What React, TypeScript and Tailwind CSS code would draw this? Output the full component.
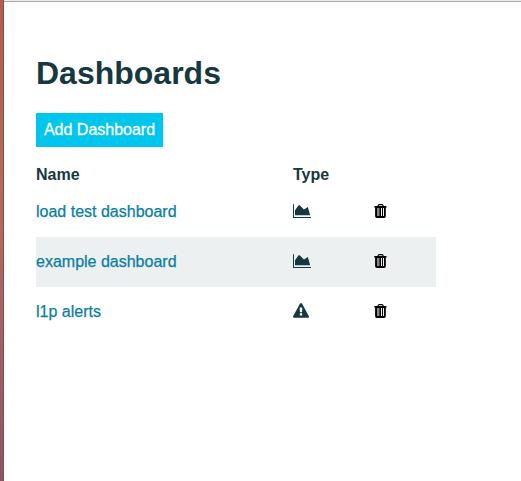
import React from "react";

type IconProps = { className?: string };

function AreaChartIcon({ className = "" }: IconProps) {
  return (
    <svg viewBox="0 0 2048 1792" width="18.29" height="16" fill="currentColor" className={className} aria-hidden="true">
      <path d="M2048 1568v112h-2048v-1552h112v1440h1936zM1664 450l256 930h-1696v-580l400-560h120l480 480z" />
    </svg>
  );
}

function WarningIcon({ className = "" }: IconProps) {
  return (
    <svg viewBox="0 0 1792 1792" width="16" height="16" fill="currentColor" className={className} aria-hidden="true">
      <path d="M1024 1375v-190q0-14-9.5-23.5t-22.5-9.5h-192q-13 0-22.5 9.5t-9.5 23.5v190q0 14 9.5 23.5t22.5 9.5h192q13 0 22.5-9.5t9.5-23.5zm-2-374l18-459q0-12-10-19-13-11-24-11h-220q-11 0-24 11-10 7-10 21l17 457q0 10 10 16.5t24 6.5h185q14 0 23.5-6.5t10.5-16.5zm-14-934l768 1408q35 63-2 126-17 29-46.5 46t-63.5 17h-1536q-34 0-63.5-17t-46.5-46q-37-63-2-126l768-1408q17-31 47-49t65-18 65 18 47 49z" />
    </svg>
  );
}

function TrashIcon({ className = "" }: IconProps) {
  return (
    <svg viewBox="0 0 13 16" width="13" height="16" className={className} aria-hidden="true">
      <path d="M3.8 3.4 4.4 2.1Q4.7 1.6 5.3 1.6h2.6q.6 0 .9.5l.6 1.3" fill="none" stroke="currentColor" strokeWidth="1.1" />
      <path d="M.3 3h12.2v1.4H11.8v8.8q0 1.8-1.7 1.8H2.8q-1.7 0-1.7-1.8V4.4H.3z" fill="currentColor" />
      <path d="M3 5h2v8H3z" fill="#858585" />
      <path d="M5 5h1v8H5z" fill="#444444" />
      <path d="M7 5h1v8H7zM9 5h1v8H9z" fill="#eeeeee" />
    </svg>
  );
}

const dashboards = [
  { name: "load test dashboard", type: "chart" },
  { name: "example dashboard", type: "chart" },
  { name: "l1p alerts", type: "alert" },
];

export default function App() {
  return (
    <div className="flex h-[481px] w-[521px] overflow-hidden bg-white font-['Liberation_Sans',Arial,sans-serif] text-base text-[#163840]">
      <div className="w-1 shrink-0 border-r border-[#874f4a] bg-linear-to-b from-[#b15d50] via-[#b46b5d] via-45% to-[#855767]" />
      <main className="h-full flex-1 border-t border-[#ececec]">
        <div className="h-px bg-[#a9a9a9]" />
        <div className="w-[432px] pl-8 pt-[52px]">
          <h1 className="text-[32px] leading-[38px] font-bold">Dashboards</h1>
          <button className="mt-[21px] block h-[34px] w-[127px] bg-[#00c6ee] text-center leading-[34px] text-white [-webkit-text-stroke:0.3px]">
            Add Dashboard
          </button>
          <table className="mt-[15px] w-[400px] table-fixed border-collapse text-left">
            <colgroup>
              <col className="w-[257px]" />
              <col className="w-[81px]" />
              <col />
            </colgroup>
            <thead>
              <tr className="h-[25px]">
                <th className="p-0 font-bold">Name</th>
                <th className="p-0 font-bold">Type</th>
                <th className="p-0" />
              </tr>
            </thead>
            <tbody>
              {dashboards.map((item) => (
                <tr key={item.name} className="h-[50px] even:bg-[#ecf0f1]">
                  <td className="p-0">
                    <a href="#" className="text-[#087ea4] [-webkit-text-stroke:0.25px]">{item.name}</a>
                  </td>
                  <td className="px-0 pt-0 pb-0.5">
                    {item.type === "chart" ? <AreaChartIcon /> : <WarningIcon />}
                  </td>
                  <td className="px-0 pt-0 pb-0.5">
                    <button className="block text-black" aria-label={`Delete ${item.name}`}>
                      <TrashIcon />
                    </button>
                  </td>
                </tr>
              ))}
            </tbody>
          </table>
        </div>
      </main>
    </div>
  );
}
